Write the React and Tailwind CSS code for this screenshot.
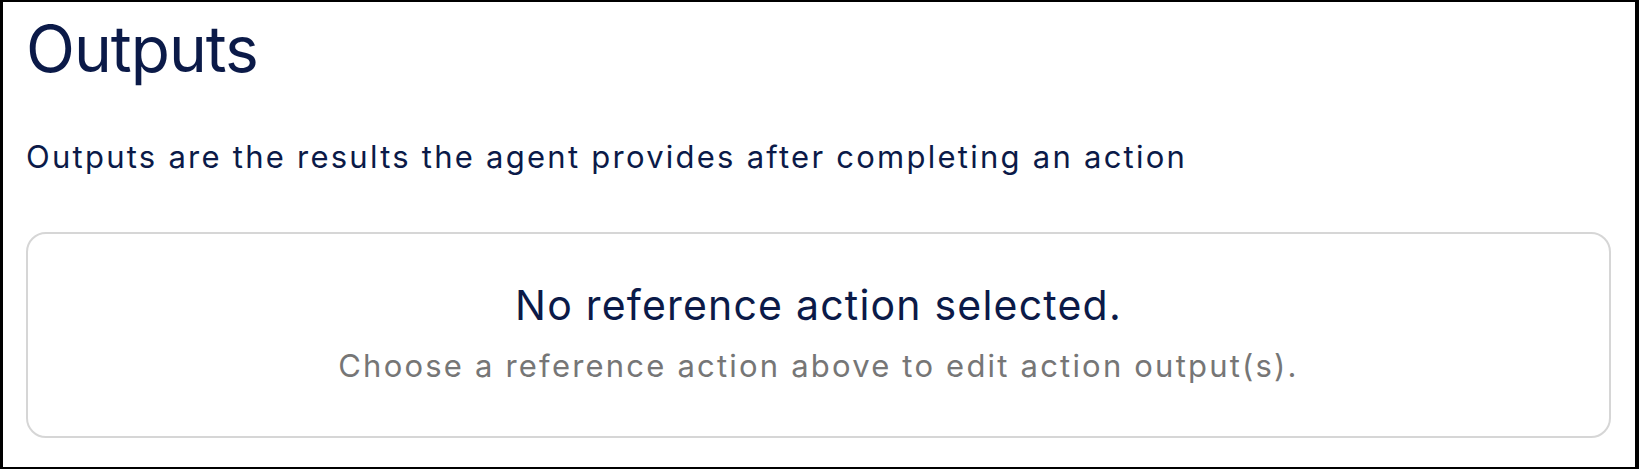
const App = () => {
  return (
    <div
      className="w-[1639px] h-[469px] bg-white border-t-2 border-b-2 border-l-[3px] border-r-[4px] border-black pl-[23px] pt-[15px]"
      style={{ fontFamily: 'Inter, "Liberation Sans", sans-serif' }}
    >
      <h1 className="text-[64px] leading-[64px] tracking-[-1px] text-[#0b1a48]">Outputs</h1>

      <p className="mt-[60px] text-[31px] leading-[31px] tracking-[2.25px] text-[#0b1a48]">
        Outputs are the results the agent provides after completing an action
      </p>

      <div className="mt-[60px] w-[1585px] h-[206px] border-2 border-[#d6d6d6] rounded-[20px] pt-[51px] text-center">
        <p className="text-[41px] leading-[41px] tracking-[1.2px] text-[#0b1a48]">No reference action selected.</p>
        <p className="mt-[24px] text-[31px] leading-[31px] tracking-[2.2px] text-[#767676]">
          Choose a reference action above to edit action output(s).
        </p>
      </div>
    </div>
  );
};

export default App;
